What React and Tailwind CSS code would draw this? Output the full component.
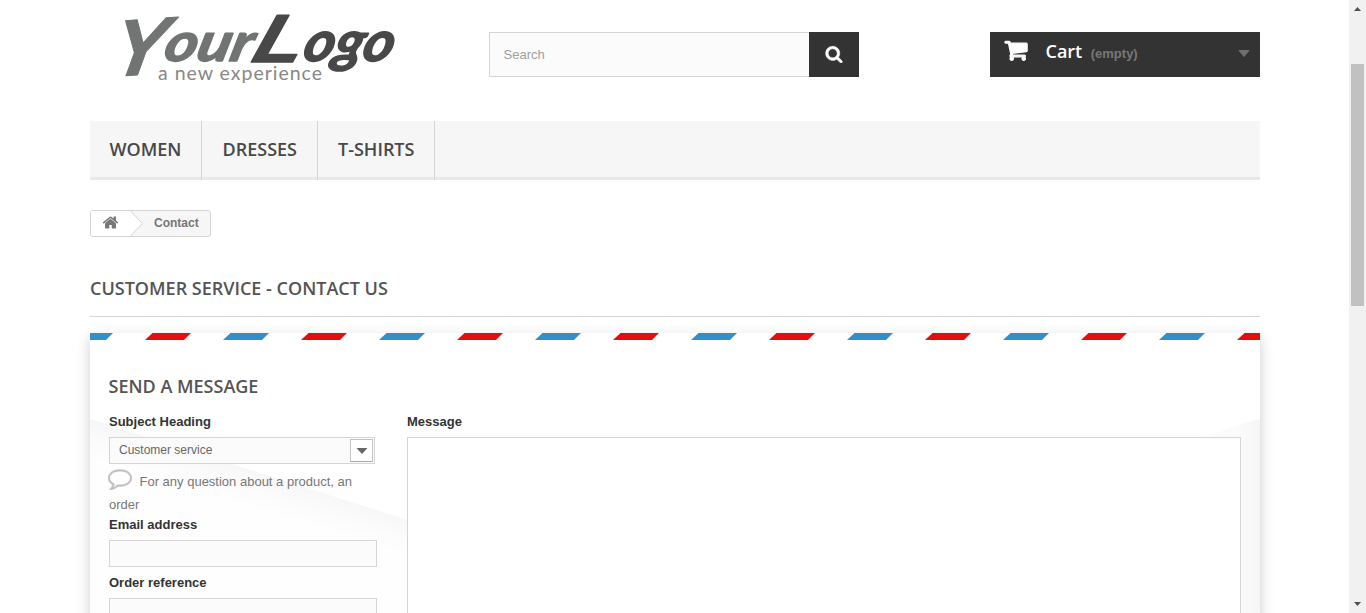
const SearchIcon = (props) => (
  <svg viewBox="0 0 1792 1792" fill="currentColor" stroke="currentColor" strokeWidth="50" {...props}>
    <path d="M1216 832q0-185-131.5-316.5t-316.5-131.5-316.5 131.5-131.5 316.5 131.5 316.5 316.5 131.5 316.5-131.5 131.5-316.500zm512 832q0 52-38 90t-90 38q-54 0-90-38l-343-342q-179 124-399 124-143 0-273.5-55.5t-225-150-150-225-55.5-273.5 55.5-273.5 150-225 225-150 273.5-55.5 273.5 55.5 225 150 150 225 55.5 273.5q0 220-124 399l343 343q37 37 37 90z" />
  </svg>
);

const CartIcon = (props) => (
  <svg viewBox="0 0 1792 1792" preserveAspectRatio="none" fill="currentColor" stroke="currentColor" strokeWidth="90" strokeLinejoin="round" {...props}>
    <path d="M704 1536q0 52-38 90t-90 38-90-38-38-90 38-90 90-38 90 38 38 90zm896 0q0 52-38 90t-90 38-90-38-38-90 38-90 90-38 90 38 38 90zm128-1088v512q0 24-16.5 42.5t-40.5 21.5l-1044 122q13 60 13 70 0 16-24 64h920q26 0 45 19t19 45-19 45-45 19h-1024q-26 0-45-19t-19-45q0-11 8-31.5t16-36 21.5-40 15.5-29.5l-177-823h-204q-26 0-45-19t-19-45 19-45 45-19h256q16 0 28.5 6.5t19.5 15.5 13 24.5 8 26 5.5 29.5 4.5 26h1201q26 0 45 19t19 45z" />
  </svg>
);

const HomeIcon = (props) => (
  <svg viewBox="0 0 1792 1792" fill="currentColor" {...props}>
    <path d="M1472 992v480q0 26-19 45t-45 19h-384v-384h-256v384h-384q-26 0-45-19t-19-45v-480q0-1 .5-3t.5-3l575-474 575 474q1 2 1 6zm223-69l-62 74q-8 9-21 11h-3q-13 0-21-7l-692-577-692 577q-12 8-24 7-13-2-21-11l-62-74q-8-10-7-23.5t11-21.5l719-599q32-26 76-26t76 26l244 204v-195q0-14 9-23t23-9h192q14 0 23 9t9 23v408l219 182q10 8 11 21.5t-7 23.5z" />
  </svg>
);

const CommentIcon = (props) => (
  <svg viewBox="0 0 1792 1792" fill="currentColor" stroke="currentColor" strokeWidth="30" {...props}>
    <path d="M896 384q-204 0-381.5 69.5t-282 187.5-104.5 255q0 112 71.5 213.5t201.5 175.5l87 50-27 96q-24 91-70 172 152-63 275-171l43-38 57 6q69 8 130 8 204 0 381.5-69.5t282-187.5 104.5-255-104.5-255-282-187.5-381.5-69.5zm896 512q0 174-120 321.5t-326 233-450 85.5q-70 0-145-8-198 175-460 242-49 14-114 22h-5q-15 0-27-10.5t-16-27.5v-1q-3-4-.5-12t2-10 4.5-9.5l6-9 7-8.5 8-9q7-8 31-34.5t34.5-38 31-39.5 32.5-51 27-59 26-76q-157-89-247.5-220t-90.5-281q0-174 120-321.5t326-233 450-85.5 450 85.5 326 233 120 321.5z" />
  </svg>
);

function Logo() {
  return (
    <svg className="block h-[99px] w-[350px]" viewBox="0 0 350 99">
      <g fontStyle="italic" strokeLinejoin="round" strokeLinecap="round">
        <g fill="#727373" stroke="#727373">
          <text transform="translate(19 77) rotate(-4) skewX(-14)" fontFamily="Liberation Sans, sans-serif" fontWeight="700" fontSize="80" strokeWidth="1" textLength="54" lengthAdjust="spacingAndGlyphs">Y</text>
          <text transform="translate(72 61) skewX(-14)" fontFamily="Lato, sans-serif" fontWeight="700" fontSize="54" strokeWidth="1.500" textLength="88" lengthAdjust="spacingAndGlyphs">our</text>
        </g>
        <g fill="#484848" stroke="#484848">
          <text transform="translate(160 61.500) skewX(-18)" fontFamily="Liberation Sans, sans-serif" fontWeight="700" fontSize="68" strokeWidth="1.500" textLength="49" lengthAdjust="spacingAndGlyphs">L</text>
          <text transform="translate(211 61) skewX(-14)" fontFamily="Lato, sans-serif" fontWeight="700" fontSize="56" strokeWidth="1.500" textLength="90" lengthAdjust="spacingAndGlyphs">ogo</text>
        </g>
      </g>
      <text x="68" y="80" fill="#888" fontFamily="Lato, sans-serif" fontWeight="400" fontSize="19.500" textLength="164" lengthAdjust="spacing">a new experience</text>
    </svg>
  );
}

function Header() {
  return (
    <header className="flex h-[121px] items-start">
      <div className="w-[399px]"><Logo /></div>
      <div className="mt-8 flex h-[45px] w-[370px]">
        <input placeholder="Search" className="h-[45px] w-[320px] border border-r-0 border-[#d6d4d4] bg-[#fbfbfb] px-[13.5px] text-[13px] placeholder:text-[#a0a0a0]" />
        <button className="flex w-[50px] items-center justify-center bg-[#333] pb-[2px] text-white">
          <SearchIcon className="h-[18px] w-[18px]" />
        </button>
      </div>
      <div className="mt-8 ml-auto flex h-[45px] w-[270px] bg-[#333] pr-[10px] pl-[14px]">
        <CartIcon className="mt-[6px] h-[24px] w-[24px] text-white" />
        <span className="ml-[17.5px] pt-[7px] font-['Open_Sans',sans-serif] text-[18px] leading-[25px] font-semibold text-white">Cart</span>
        <span className="ml-[8.5px] pt-[12px] text-[13px] leading-[20px] font-bold text-[#777]">(empty)</span>
        <svg className="mt-[18px] ml-auto h-[7px] w-[12px]" viewBox="0 0 12 7"><path d="M1 .5h10L6 6.5z" fill="#6f6f6f" stroke="#6f6f6f" strokeLinejoin="round" /></svg>
      </div>
    </header>
  );
}

const tabs = [
  { name: "WOMEN", size: "w-[112px] pl-[19.5px]" },
  { name: "DRESSES", size: "w-[116px] pl-[20.5px]" },
  { name: "T-SHIRTS", size: "w-[117px] pl-[20px]" },
];

function Nav() {
  return (
    <nav className="flex h-[59px] bg-[#f6f6f6] shadow-[inset_0_-3px_0_#e9e9e9]">
      {tabs.map((t) => (
        <a key={t.name} className={`${t.size} border-r border-[#d6d4d4] pt-[17px] font-['Open_Sans',sans-serif] text-[18px] leading-[22px] font-semibold text-[#484848]`}>{t.name}</a>
      ))}
    </nav>
  );
}

function Breadcrumb() {
  return (
    <div className="mt-[30px] flex h-[27px] w-[121px] overflow-hidden rounded-[3px] border border-[#d6d4d4] bg-[#f6f6f6] text-[#777]">
      <div className="flex w-[39px] justify-center bg-white pt-[3px]">
        <HomeIcon className="h-[17px] w-[17px]" />
      </div>
      <svg className="h-[25px] w-[14px]" viewBox="0 0 14 25">
        <path d="M0 0H.5L12.5 12.5.5 25H0z" fill="#fff" />
        <path d="M.5 0l12 12.5L.5 25" fill="none" stroke="#d6d4d4" />
      </svg>
      <span className="ml-[10px] pt-[2px] text-[12px] leading-[20px] font-bold">Contact</span>
    </div>
  );
}

function AirmailStripe() {
  return (
    <svg className="block h-[7px] w-[1170px]" viewBox="0 0 1170 7">
      <defs>
        <pattern id="airmail" width="156" height="7" patternUnits="userSpaceOnUse" x="-23">
          <path d="M7.5 0H46L39 7H0z" fill="#338fc6" />
          <path d="M85.5 0H124L117 7H78z" fill="#e50e0e" />
        </pattern>
      </defs>
      <rect width="1170" height="7" fill="url(#airmail)" />
    </svg>
  );
}

function EnvelopeFlaps() {
  return (
    <svg className="absolute inset-0 h-[400px] w-[1170px]" viewBox="0 0 1170 400">
      <defs>
        <linearGradient id="flapLeft" gradientUnits="userSpaceOnUse" x1="160" y1="136" x2="149" y2="172">
          <stop offset="0" stopColor="#f7f7f7" />
          <stop offset="0.5" stopColor="#fbfbfb" />
          <stop offset="1" stopColor="#fefefe" />
        </linearGradient>
        <linearGradient id="flapRight" gradientUnits="userSpaceOnUse" x1="1170" y1="0" x2="1145" y2="0">
          <stop offset="0" stopColor="#f6f6f6" />
          <stop offset="1" stopColor="#fbfbfb" />
        </linearGradient>
      </defs>
      <path d="M0 86L4 87 330 191V400H0z" fill="url(#flapLeft)" />
      <path d="M1170 86L1165 87 1108 106V400H1170z" fill="url(#flapRight)" />
    </svg>
  );
}

const label = "block text-[13px] font-bold text-[#333]";
const field = "block h-[27px] w-[268px] border border-[#d6d4d4] bg-[#fbfbfb]";

function ContactForm() {
  return (
    <form className="relative mt-4 h-[500px] bg-white shadow-[0_5px_13px_rgba(0,0,0,0.2)]">
      <EnvelopeFlaps />
      <div className="relative">
        <AirmailStripe />
        <h3 className="ml-[18.5px] h-[58px] pt-[35px] font-['Open_Sans',sans-serif] text-[18px] leading-[22px] font-semibold text-[#555454]">SEND A MESSAGE</h3>
        <div className="flex pt-[14px] pl-[19px]">
          <div className="w-[298px]">
            <label className={`${label} leading-[20px]`}>Subject Heading</label>
            <div className="mt-[5px] flex h-[27px] w-[266px] border border-[#d6d4d4] bg-[#fbfbfb] pr-px pl-[9px]">
              <span className="text-[12px] leading-[24px] text-[#666]">Customer service</span>
              <span className="mt-px ml-auto flex h-[23px] w-[23px] items-center justify-center border border-[#c4c2c2] border-b-[#aaa] bg-white">
                <svg className="ml-px h-[6px] w-[12px]" viewBox="0 0 12 6"><path d="M.5 0h11L6 6z" fill="#666" /></svg>
              </span>
            </div>
            <p className="w-[268px] pt-[6px] text-[13px] leading-[23px] text-[#777]">
              <CommentIcon className="mt-[-9px] mr-[7.5px] ml-[-1px] inline-block h-[24px] w-[24px] align-middle text-[#c0c0c0]" />
              For any question about a product, an order
            </p>
            <label className={`${label} leading-[18px]`}>Email address</label>
            <input className={`${field} mt-[6px]`} />
            <label className={`${label} mt-[7px] leading-[18px]`}>Order reference</label>
            <input className={`${field} mt-[6px]`} />
          </div>
          <div>
            <label className={`${label} leading-[20px]`}>Message</label>
            <textarea className="mt-[5px] block h-[260px] w-[834px] resize-none border border-[#d6d4d4] bg-white" />
          </div>
        </div>
      </div>
    </form>
  );
}

function Scrollbar() {
  return (
    <div className="flex h-[613px] w-[17px] flex-col items-center bg-[#f1f1f1]">
      <svg className="h-[64px] w-[17px]" viewBox="0 0 17 64"><path d="M5 11h7L8.500 7z" fill="#505050" /></svg>
      <div className="h-[242px] w-[13px] bg-[#c1c1c1]" />
      <svg className="mt-auto h-[17px] w-[17px]" viewBox="0 0 17 17"><path d="M5 6h7L8.500 10z" fill="#505050" /></svg>
    </div>
  );
}

export default function App() {
  return (
    <div className="flex h-[613px] w-[1366px] overflow-hidden bg-white font-['Liberation_Sans',Arial,sans-serif]">
      <div className="h-[613px] w-[1349px] overflow-hidden pl-[90px]">
        <main className="w-[1170px]">
          <Header />
          <Nav />
          <Breadcrumb />
          <h1 className="mt-[40px] h-[40px] border-b border-[#d6d4d4] font-['Open_Sans',sans-serif] text-[18px] leading-[22px] font-semibold text-[#555454]">CUSTOMER SERVICE - CONTACT US</h1>
          <ContactForm />
        </main>
      </div>
      <Scrollbar />
    </div>
  );
}
